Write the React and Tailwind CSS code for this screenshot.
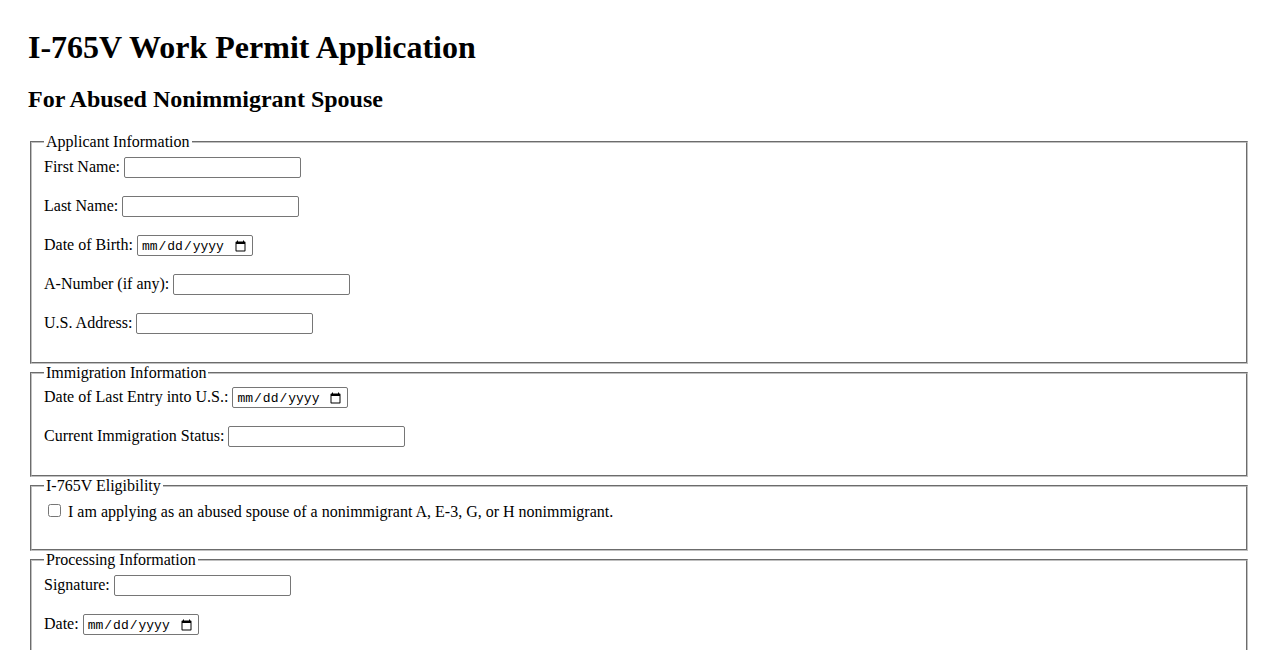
import React from "react";

const textInput =
  "w-[177px] h-[21px] border border-[#767676] rounded-[2px] px-[2px] py-[1px] align-baseline bg-white text-[13.33px] font-['Liberation_Sans',sans-serif]";
const dateInput =
  "w-[116px] h-[21px] border border-[#767676] rounded-[2px] pl-[3px] pr-[3px] pt-[2px] align-baseline bg-white text-[13px] font-['Liberation_Mono',monospace]";
const fieldsetCls =
  "mx-[2px] border-2 [border-style:groove] border-[#c0c0c0] px-3 pt-[5.6px] pb-[10px]";
const legendCls = "px-[2px]";

function Field({ id, label, type = "text" }) {
  return (
    <>
      <label htmlFor={id}>{label}</label>{" "}
      <input
        id={id}
        type={type}
        className={type === "date" ? dateInput : textInput}
      />
      <br />
      <br />
    </>
  );
}

export default function App() {
  return (
    <div className="px-[28px] pt-[8px] pb-[8px] bg-white text-black leading-[normal] text-[16px] font-['Liberation_Serif','Times_New_Roman',serif]">
      <h1 className="text-[32px] font-bold mb-[19.5px] mt-[21.44px]">
        I-765V Work Permit Application
      </h1>
      <h2 className="text-[24px] font-bold my-[19.92px]">
        For Abused Nonimmigrant Spouse
      </h2>

      <form>
        <fieldset className={fieldsetCls}>
          <legend className={legendCls}>Applicant Information</legend>
          <Field id="firstName" label="First Name:" />
          <Field id="lastName" label="Last Name:" />
          <Field id="dob" label="Date of Birth:" type="date" />
          <Field id="aNumber" label="A-Number (if any):" />
          <Field id="address" label="U.S. Address:" />
        </fieldset>

        <fieldset className={fieldsetCls}>
          <legend className={legendCls}>Immigration Information</legend>
          <Field id="lastEntry" label="Date of Last Entry into U.S.:" type="date" />
          <Field id="status" label="Current Immigration Status:" />
        </fieldset>

        <fieldset className={fieldsetCls}>
          <legend className={legendCls}>I-765V Eligibility</legend>
          <input
            id="eligible"
            type="checkbox"
            className="m-[3px_3px_3px_4px] w-[13px] h-[13px] align-baseline"
          />{" "}
          <label htmlFor="eligible">
            I am applying as an abused spouse of a nonimmigrant A, E-3, G, or H
            nonimmigrant.
          </label>
          <br />
          <br />
        </fieldset>

        <fieldset className={fieldsetCls}>
          <legend className={legendCls}>Processing Information</legend>
          <Field id="signature" label="Signature:" />
          <Field id="date" label="Date:" type="date" />
        </fieldset>
        <br />
        <button
          type="submit"
          className="border border-[#767676] rounded-[2px] bg-[#efefef] px-[6px] py-[1px] text-[13.33px] font-['Liberation_Sans',sans-serif]"
        >
          Submit Application
        </button>
      </form>
    </div>
  );
}
